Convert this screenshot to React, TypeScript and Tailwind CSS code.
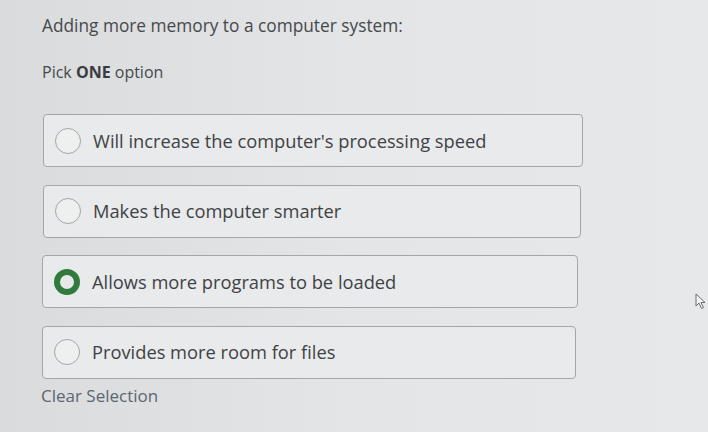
import React, { useState } from 'react';

const OPTIONS = [
  "Will increase the computer's processing speed",
  'Makes the computer smarter',
  'Allows more programs to be loaded',
  'Provides more room for files',
];

function Radio({ checked }: { checked: boolean }) {
  if (checked) {
    return <span className="w-[26px] h-[26px] rounded-full border-[6px] border-[#2f7a3c] bg-[#e6e9e8] shrink-0" />;
  }
  return <span className="w-[26px] h-[26px] rounded-full border-[1.5px] border-[#a3a7a8] bg-[#eef0f0] shrink-0" />;
}

export default function App() {
  const [selected, setSelected] = useState<number | null>(2);

  return (
    <div
      className="relative w-[708px] h-[432px] overflow-hidden bg-gradient-to-r from-[#d9dbdc] via-[#e3e5e6] to-[#e6e8e9] text-[#3f4245]"
      style={{ fontFamily: '"Open Sans", "Liberation Sans", sans-serif' }}
    >
      <div className="pl-[42px] pt-[14px]">
        <h1 className="text-[17.3px] leading-[24px] text-[#46494c]">Adding more memory to a computer system:</h1>
        <p className="mt-[23px] text-[16px] leading-[22px] text-[#46494c]">
          Pick <span className="font-bold text-[#3a3c3f]">ONE</span> option
        </p>

        <div className="mt-[31px] flex flex-col gap-[17.5px]">
          {OPTIONS.map((opt, i) => (
            <button
              key={opt}
              onClick={() => setSelected(i)}
              className="h-[53px] flex items-center gap-[12px] pl-[11px] rounded-[4px] border border-[#a4a7a8] bg-[#e8eaeb] text-left"
              style={{ marginLeft: i < 2 ? 1 : 0, width: 540 - i * 2 }}
            >
              <Radio checked={selected === i} />
              <span className="text-[18.3px] leading-[24px] text-[#3f4245]">{opt}</span>
            </button>
          ))}
        </div>

        <button
          onClick={() => setSelected(null)}
          className="mt-[5px] -ml-[1px] text-[17px] leading-[24px] text-[#5b6670]"
        >
          Clear Selection
        </button>
      </div>

      <svg className="absolute left-[695px] top-[293px]" width="12" height="17" viewBox="0 0 12 17">
        <path d="M1 1 L1 13 L4 10 L6.5 15.5 L8.5 14.5 L6 9.5 L10 9.5 Z" fill="#f4f5f5" stroke="#6a6d70" strokeWidth="1" strokeLinejoin="round" />
      </svg>
    </div>
  );
}
